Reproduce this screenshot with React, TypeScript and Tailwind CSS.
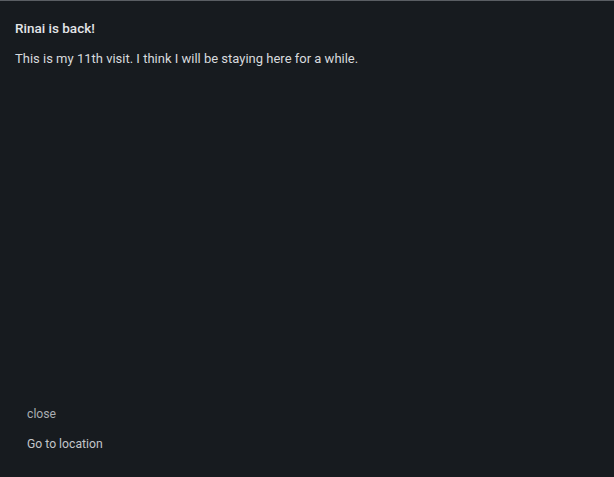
export default function App() {
  return (
    <div
      className="h-[477px] w-[614px] bg-[#171b1f] border-t border-[#5a5e63] flex flex-col text-[#e3e5e8]"
      style={{ fontFamily: 'Roboto, "Noto Sans", sans-serif' }}
    >
      <div className="px-[15px] pt-[17px]">
        <h1 className="text-[13.5px] font-medium leading-[20px]">Rinai is back!</h1>
        <p className="mt-[11px] text-[13px] leading-[20px] text-[#d8dadd]">
          This is my 11th visit. I think I will be staying here for a while.
        </p>
      </div>
      <div className="mt-auto flex flex-col items-start gap-[12px] px-[27px] pb-[24px]">
        <button className="text-[12.2px] leading-[18px] text-[#a9adb2]">close</button>
        <button className="text-[12.2px] leading-[18px] text-[#c3c6ca]">Go to location</button>
      </div>
    </div>
  );
}
